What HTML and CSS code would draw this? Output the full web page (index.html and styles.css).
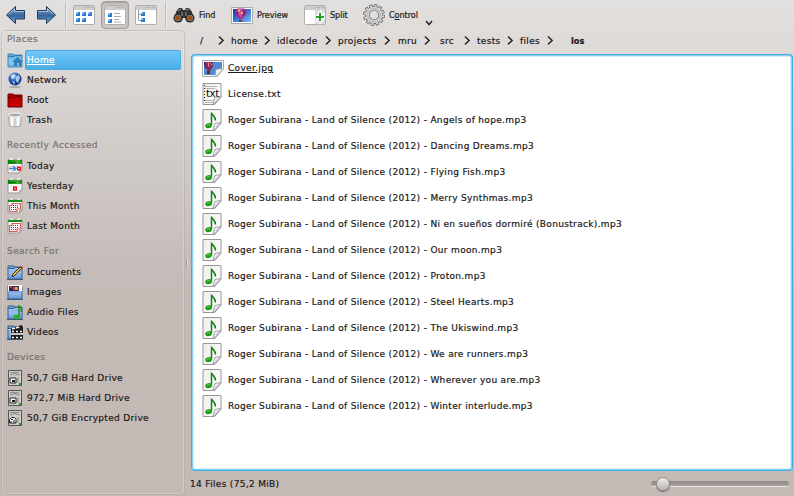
FILE: index.html
```
<!DOCTYPE html>
<html lang="en">
<head>
<meta charset="utf-8">
<title>los</title>
<link rel="stylesheet" href="styles.css">
<script src="app.js" defer></script>
</head>
<body>
<svg class="defs" aria-hidden="true">
  <defs>
    <linearGradient id="gArrow" x1="0" y1="0" x2="0" y2="1"><stop offset="0" stop-color="#8baed7"/><stop offset=".48" stop-color="#416c9f"/><stop offset=".55" stop-color="#34639d"/><stop offset="1" stop-color="#87b8ec"/></linearGradient>
    <linearGradient id="gFolder" x1="0" y1="0" x2="0" y2="1"><stop offset="0" stop-color="#669edb"/><stop offset=".5" stop-color="#9bc0ec"/><stop offset="1" stop-color="#5d94d5"/></linearGradient>
    <linearGradient id="gHome" x1="0" y1="0" x2="0" y2="1"><stop offset="0" stop-color="#4ca6da"/><stop offset=".6" stop-color="#92ccef"/><stop offset="1" stop-color="#63addc"/></linearGradient>
    <linearGradient id="gSky" x1="0" y1="0" x2="1" y2="1"><stop offset="0" stop-color="#0737ac"/><stop offset="1" stop-color="#79bbf5"/></linearGradient>
    <radialGradient id="gGlobe" cx=".4" cy=".3"><stop offset="0" stop-color="#dceeff"/><stop offset=".45" stop-color="#4c84d3"/><stop offset="1" stop-color="#153b91"/></radialGradient>
    <linearGradient id="gPage" x1="0" y1="0" x2="1" y2="1"><stop offset="0" stop-color="#ededed"/><stop offset="1" stop-color="#fff"/></linearGradient>
    <linearGradient id="gRed" x1="0" y1="0" x2="0" y2="1"><stop offset="0" stop-color="#ae0000"/><stop offset="1" stop-color="#d00000"/></linearGradient>
    <linearGradient id="gGreen" x1="0" y1="0" x2="1" y2="0"><stop offset="0" stop-color="#0c850c"/><stop offset=".7" stop-color="#43ae32"/><stop offset="1" stop-color="#16830c"/></linearGradient>
  </defs>
  <symbol id="arrow" viewBox="0 0 20 20"><path d="M1 10 10 1.500v4h9v8.500h-9v4.500z" fill="url(#gArrow)" stroke="#223a5b" stroke-linejoin="round"/><path d="M3 9.500 9 4v2.500h9" fill="none" stroke="#b7d1ec" stroke-width=".8"/></symbol>
  <symbol id="win" viewBox="0 0 22 20"><rect x=".5" y=".5" width="21" height="19" rx="1" fill="#fff" stroke="#b0aeac"/><path d="M1 1h20v4H1z" fill="#cfcdcc"/><path d="M11 2.500h9" stroke="#aaa8a6" stroke-dasharray="1 1"/></symbol>
  <symbol id="icons" viewBox="0 0 22 20"><use href="#win" width="22" height="20"/><path d="M3 7h4v4H3zM9 7h4v4H9zM15 7h4v4h-4zM3 13h4v4H3zM9 13h4v4H9z" fill="#2c78cc"/><path d="M3 7h2v2H3zM9 7h2v2H9zM15 7h2v2h-2zM3 13h2v2H3zM9 13h2v2H9z" fill="#8dc1f2"/></symbol>
  <symbol id="details" viewBox="0 0 22 20"><use href="#win" width="22" height="20"/><path d="M4 8h4v4H4zM4 14h4v4H4z" fill="#2c78cc"/><path d="M4 8h2v2H4zM4 14h2v2H4z" fill="#8dc1f2"/><path d="M10 8.500h6M10 11.500h7M10 14.500h5M10 17h7" stroke="#aaa"/></symbol>
  <symbol id="tree" viewBox="0 0 22 20"><use href="#win" width="22" height="20"/><path d="M3.500 5v10.500H7M3.500 9.500H7" fill="none" stroke="#999"/><path d="M6 7h4v4H6zM6 13h4v4H6z" fill="#2c78cc"/><path d="M6 7h2v2H6zM6 13h2v2H6z" fill="#8dc1f2"/></symbol>
  <symbol id="binoc" viewBox="0 0 22 16"><path d="M1 11 3.500 4 6 1h3l1 2h2l1-2h3l2.500 3L21 11l-3 4h-4l-2-4h-2l-2 4H4z" fill="#343332"/><circle cx="5" cy="11" r="4.500" fill="#222"/><circle cx="17" cy="11" r="4.500" fill="#222"/><circle cx="5" cy="11" r="3" fill="#9c4e19" stroke="#777"/><circle cx="17" cy="11" r="3" fill="#9c4e19" stroke="#777"/><path d="M5 4 8 2M13 3l3-1M9 5v4M13 5v4" stroke="#999"/></symbol>
  <symbol id="preview" viewBox="0 0 22 17"><path d="M.5.5h21v16H.5z" fill="#fff" stroke="#aaa"/><path d="M2 2h18v13H2z" fill="url(#gSky)"/><path d="M4 3 7 1.500h6L16 4l-.5 3-5 5.500h-2L4 7z" fill="#a52e92"/><path d="m7 2 1 6 2 3 1-9z" fill="#c959a0"/><path d="M4 5l3 1v3zM12 3l3 2-3 4z" fill="#642e86"/><path d="M7 2.500h2v2H7zM10 5h2v2h-2z" fill="#efbe54"/><path d="M8 13h3v2H8z" fill="#754319"/></symbol>
  <symbol id="split" viewBox="0 0 22 20"><use href="#win" width="22" height="20"/><path d="M11 5h10v14H11z" fill="#ddd"/><path d="m12 17 8-9M12 12l6-7M15 19l6-7" stroke="#f5f5f5" stroke-width="2"/><path d="M16 8v8M12 12h8" stroke="#fff" stroke-width="4"/><path d="M16 8v8M12 12h8" stroke="#21a321" stroke-width="2"/></symbol>
  <symbol id="gear" viewBox="0 0 22 22"><circle cx="11" cy="11" r="9.200" fill="none" stroke="#666" stroke-width="3.400" stroke-dasharray="3 1.817"/><circle cx="11" cy="11" r="6.800" fill="none" stroke="#666" stroke-width="4.800"/><circle cx="11" cy="11" r="9" fill="none" stroke="#d6d6d6" stroke-width="2.200" stroke-dasharray="1.900 2.812" stroke-dashoffset="-.5"/><circle cx="11" cy="11" r="6.700" fill="none" stroke="#d3d3d3" stroke-width="3.300"/><circle cx="11" cy="11" r="6.500" fill="none" stroke="#b4b4b4"/></symbol>
  <symbol id="folder" viewBox="0 0 16 16"><path d="M1 2h6l1 1h7v12H1z" fill="url(#gFolder)" stroke="#3d6290"/><path d="M1 4.500h6l1-1h7" fill="none" stroke="#345c8d"/><path d="M1.500 5.500h6l1-1h6" fill="none" stroke="#b0cdf0"/><path d="M0 15.500h16" stroke="#405874"/></symbol>
  <symbol id="home" viewBox="0 0 16 16"><path d="M1 2h5l1 1h8v12H1z" fill="url(#gHome)" stroke="#438db8"/><path d="M1 4.500h6l1-1h7" fill="none" stroke="#2d80b0"/><path d="m5 10 5.500-5L16 10h-1.500v4H12v-3h-2v3H7v-4z" fill="#327fb5"/></symbol>
  <symbol id="network" viewBox="0 0 16 16"><ellipse cx="8" cy="15" rx="6" ry="1" fill="#888" opacity=".55"/><circle cx="8" cy="7" r="6.500" fill="url(#gGlobe)"/><path d="m4 3 3-1 1 2-2 3-2-1zM9 5l3-2 1 3-2 5-2-2zM5 9l3 1-1 3z" fill="#c9def4" opacity=".8"/></symbol>
  <symbol id="root" viewBox="0 0 16 16"><path d="M1 2h5l1 1h8v12H1z" fill="url(#gRed)" stroke="#600"/><path d="M1 5.500h6l1-1h7" fill="none" stroke="#690000"/></symbol>
  <symbol id="trash" viewBox="0 0 16 16"><path d="m1.500 3 1 11q5.500 2 11 0l1-11z" fill="#e4e4e3" stroke="#a8a6a4"/><ellipse cx="8" cy="3" rx="6.500" ry="2" fill="#aaa" stroke="#fff"/><path d="M5 6v8M11 6v8" stroke="#fff" stroke-width="2"/><path d="M8 6v8" stroke="#bbb"/></symbol>
  <symbol id="cal" viewBox="0 0 16 16"><path d="M1 2h14v10l-3 3H1z" fill="#fafafa" stroke="#979593"/><path d="M1 2h14v4H1z" fill="url(#gGreen)"/><path d="M3 1h3M10 1h3" stroke="#e6e6e6" stroke-width="2"/><path d="M2 4.500h7" stroke="#086f08"/><path d="m12 15 .5-2.500L15 12z" fill="#ddd" stroke="#999" stroke-width=".7"/></symbol>
  <symbol id="today" viewBox="0 0 16 16"><use href="#cal" width="16" height="16"/><path d="M3 8.500h8M4 12.500h7" stroke="#bbb" stroke-dasharray="1 1"/><path d="M2 10.500h6M6 8l3 2.500L6 13" fill="none" stroke="#4786cf" stroke-width="1.300"/><path d="M10.700 9.200h2.600v2.600h-2.600z" fill="#fff" stroke="#d00" stroke-width="1.300"/></symbol>
  <symbol id="yesterday" viewBox="0 0 16 16"><use href="#cal" width="16" height="16"/><path d="M4 8.500h8M4 12.500h8" stroke="#bbb" stroke-dasharray="1 1"/><path d="M6.700 9.200h2.600v2.600H6.700z" fill="#fff" stroke="#d00" stroke-width="1.300"/></symbol>
  <symbol id="month" viewBox="0 0 16 16"><path d="M1 2h14v10l-3 3H1z" fill="#fff" stroke="#969492"/><path d="M1 2h14v2H1z" fill="#159016"/><path d="M3 1h3M10 1h3" stroke="#ddd" stroke-width="2"/><path d="M5 5.500h8.500V11H10v2.500H2.500v-6H5z" fill="#fff" stroke="#d65c5c" stroke-width="1.200"/><path d="M6 7.500h6M4 9.500h8M4 11.500h5" stroke="#444" stroke-dasharray="1 1"/><path d="m12 15 .5-2.500L15 12z" fill="#ddd" stroke="#888" stroke-width=".7"/></symbol>
  <symbol id="documents" viewBox="0 0 16 16"><use href="#folder" width="16" height="16"/><path d="m5 12.500.5-2L13 3l2 1-8 8z" fill="#eec03b" stroke="#272016" stroke-width=".9"/><path d="m13 3 1-1 2 1-1 1.500z" fill="#df342d"/></symbol>
  <symbol id="images" viewBox="0 0 16 16"><use href="#folder" width="16" height="16"/><path d="M1 1h14v6H1z" fill="#fff"/><path d="M2 2h10v5H2z" fill="#342641"/><path d="M3 2h2v2H3zM6 3h2v3H6z" fill="#c63b62"/><path d="M8 3h3v3H8z" fill="#e19b43"/><path d="M1 7h14v2H1z" fill="#7eaadd"/></symbol>
  <symbol id="audio" viewBox="0 0 16 16"><use href="#folder" width="16" height="16"/><path d="M12 13V2q3 2 2.500 6" fill="none" stroke="#198f1a" stroke-width="1.500"/><ellipse cx="9.500" cy="13" rx="3" ry="2.200" fill="#28b322"/></symbol>
  <symbol id="videos" viewBox="0 0 16 16"><use href="#folder" width="16" height="16"/><path d="M4 4 15 1l1 3v11H4z" fill="#1b1b1b"/><path d="m5 5 2-1 1 1M9 4l2-1 1 1M5 7.500h2M9 7.500h2M13 7.500h2M4 10h12M5 13.500h2M9 13.500h2M13 13.500h2" fill="none" stroke="#fff" stroke-width="1.400"/></symbol>
  <symbol id="drive" viewBox="0 0 16 16"><path d="M1.500.5h13v15h-13z" fill="#d0cecc" stroke="#555"/><path d="m3 3 3-1 3 1 3-1M3 5q5-3 10 0M11 7v6M9 5v1" fill="none" stroke="#868482"/><path d="M3 8h6v5H3z" fill="#fff" stroke="#222"/><path d="M5 10h3v2H5z" fill="#222"/><path d="M12 14h2" stroke="#15a614" stroke-width="2"/></symbol>
  <symbol id="crypt" viewBox="0 0 16 16"><path d="M1.500.5h13v15h-13z" fill="#d0cecc" stroke="#555"/><path d="m3 3 3-1 3 1 3-1M3 5q5-3 10 0M11 7v6" fill="none" stroke="#868482"/><path d="M2.500 13V9.500l2-2h3l1.500 2V13z" fill="#fff" stroke="#242424"/><path d="M4 9.500h2M4 11v2M7 10v3" stroke="#222"/><path d="M12 14h2" stroke="#15a614" stroke-width="2"/></symbol>
  <symbol id="page" viewBox="0 0 20 22"><path d="M1 .5h18v14l-6.500 7H1z" fill="url(#gPage)" stroke="#979797"/></symbol>
  <symbol id="fold" viewBox="0 0 20 22"><path d="m11 20.500 2-6 5.500-1-6 7z" fill="#f2f2f2" stroke="#8c8c8c" stroke-width=".8"/></symbol>
  <symbol id="song" viewBox="0 0 20 22"><use href="#page" width="20" height="22"/><use href="#fold" width="20" height="22"/><path d="M9.500 16V3.500c.5 3 4.500 4 4 8" fill="none" stroke="#158417" stroke-width="1.500"/><ellipse cx="6.600" cy="16.600" rx="3.400" ry="2.500" fill="#199b18" transform="rotate(-12 6.600 16.600)"/><path d="M5 16.500q1-1.500 3-.5" fill="none" stroke="#77dc57"/></symbol>
  <symbol id="text" viewBox="0 0 20 22"><use href="#page" width="20" height="22"/><path d="M3 3.500h12M3 5.500h10M3 17.500h9M3 19.500h8" stroke="#b5b5b5"/><path d="M2.500 2v18" stroke="#333" stroke-dasharray="1 2"/><use href="#fold" width="20" height="22"/></symbol>
  <symbol id="cover" viewBox="0 0 22 17"><path d="M.5.5h21V9l-6 7.500H.5z" fill="#fff" stroke="#aaa"/><path d="M2 2h18v7l-5 6H2z" fill="#5289cf"/><path d="M2 2h9l-2 7H4L2 6z" fill="#273478"/><path d="M3 2h7l1 4-3 5H6L3 7z" fill="#8c255f"/><path d="m6 2 1 5M8 3l2 2" stroke="#ee8a91"/><path d="M5 11h3v3H5z" fill="#493335"/><path d="M13.500 15.500 14 9.500l6.500-1-5.500 7z" fill="#f6f6f6" stroke="#aaa" stroke-width=".8"/></symbol>
  <symbol id="chev" viewBox="0 0 7 11"><path d="m1 2.500 4 4-4 4" fill="none" stroke="#fff" stroke-opacity=".6" stroke-width="1.500"/><path d="m1 1.500 4 4-4 4" fill="none" stroke="#2c2a29" stroke-width="1.700"/></symbol>
</svg>
<div class="window">
  <header class="toolbar">
    <button class="nav"><svg class="i20"><use href="#arrow"/></svg></button>
    <button class="nav forward"><svg class="i20"><use href="#arrow"/></svg></button>
    <i class="sep"></i>
    <button class="mode"><svg class="win"><use href="#icons"/></svg></button>
    <button class="mode active"><svg class="win"><use href="#details"/></svg></button>
    <button class="mode"><svg class="win"><use href="#tree"/></svg></button>
    <i class="sep second"></i>
    <button class="tool find"><svg class="binoc"><use href="#binoc"/></svg><span>Find</span></button>
    <button class="tool preview"><svg class="photo"><use href="#preview"/></svg><span>Preview</span></button>
    <button class="tool split"><svg class="win"><use href="#split"/></svg><span>Split</span></button>
    <button class="tool control"><svg class="gear"><use href="#gear"/></svg><span>C<u>o</u>ntrol</span></button>
    <svg class="caret" viewBox="0 0 8 6"><path d="m1 1 3 3.500L7 1" fill="none" stroke="#292827" stroke-width="1.500"/></svg>
  </header>
  <div class="body">
    <aside class="places">
      <h2>Places</h2>
      <a class="place selected"><svg><use href="#home"/></svg><span>Home</span></a>
      <a class="place"><svg><use href="#network"/></svg><span>Network</span></a>
      <a class="place"><svg><use href="#root"/></svg><span>Root</span></a>
      <a class="place"><svg><use href="#trash"/></svg><span>Trash</span></a>
      <h2>Recently Accessed</h2>
      <a class="place"><svg><use href="#today"/></svg><span>Today</span></a>
      <a class="place"><svg><use href="#yesterday"/></svg><span>Yesterday</span></a>
      <a class="place"><svg><use href="#month"/></svg><span>This Month</span></a>
      <a class="place"><svg><use href="#month"/></svg><span>Last Month</span></a>
      <h2>Search For</h2>
      <a class="place"><svg><use href="#documents"/></svg><span>Documents</span></a>
      <a class="place"><svg><use href="#images"/></svg><span>Images</span></a>
      <a class="place"><svg><use href="#audio"/></svg><span>Audio Files</span></a>
      <a class="place"><svg><use href="#videos"/></svg><span>Videos</span></a>
      <h2>Devices</h2>
      <a class="place"><svg><use href="#drive"/></svg><span>50,7 GiB Hard Drive</span></a>
      <a class="place"><svg><use href="#drive"/></svg><span>972,7 MiB Hard Drive</span></a>
      <a class="place"><svg><use href="#crypt"/></svg><span>50,7 GiB Encrypted Drive</span></a>
    </aside>
    <div class="grip"><i></i><i></i><i></i></div>
    <main>
      <nav class="crumbs">
        <span>/</span><svg><use href="#chev"/></svg><span>home</span><svg><use href="#chev"/></svg><span>idlecode</span><svg><use href="#chev"/></svg><span>projects</span><svg><use href="#chev"/></svg><span>mru</span><svg><use href="#chev"/></svg><span>src</span><svg><use href="#chev"/></svg><span>tests</span><svg><use href="#chev"/></svg><span>files</span><svg><use href="#chev"/></svg><b>los</b>
      </nav>
      <section class="files" id="files">
        <div class="file current"><svg class="photo"><use href="#cover"/></svg><span>Cover.jpg</span></div>
        <div class="file"><svg viewBox="0 0 20 22"><use href="#text" width="20" height="22"/><text x="4" y="14" class="txt">txt</text></svg><span>License.txt</span></div>
      </section>
      <footer><span>14 Files (75,2 MiB)</span><div class="slider"><i></i></div></footer>
    </main>
  </div>
</div>
</body>
</html>
```
FILE: styles.css
```
* { box-sizing: border-box; }
body { margin: 0; font: 9px/14px "DejaVu Sans", sans-serif; letter-spacing: .325px; color: #1c1918; -webkit-text-stroke: .2px; overflow: hidden; }
.defs { position: absolute; width: 0; height: 0; }
.window { width: 794px; height: 496px; display: flex; flex-direction: column; background: linear-gradient(#e2e0de 0, #dcd8d5 60px, #d0cac7 165px, #c5bdb9 260px, #c3bab6 320px); }
button { border: 0; background: none; padding: 0; font: inherit; color: inherit; display: flex; align-items: center; }
svg { display: block; flex: none; }
.toolbar { height: 30px; display: flex; align-items: center; padding-left: 5px; }
.toolbar button { height: 28px; }
.i20 { width: 21px; height: 20px; }
.toolbar .nav { width: 31px; }
.forward svg { transform: scaleX(-1); }
.sep { width: 2px; height: 26px; margin-right: 3px; margin-left: -2px; border-left: 1px solid #c1bdba; border-right: 1px solid #f0eeed; }
.second { margin: 0 6px 0 2px; }
.mode { width: 28px; justify-content: center; margin-right: 3px; }
.active { border: 1px solid #a39e9b; border-radius: 4px; background: #cfcac7; box-shadow: inset 0 1px 2px #9c9794; }
.win { width: 22px; height: 20px; }
.binoc { width: 22px; height: 16px; }
.photo { width: 22px; height: 17px; }
.gear { width: 22px; height: 22px; }
.toolbar .tool { gap: 4px; font: 9px/14px "DejaVu Sans Condensed", "DejaVu Sans", sans-serif; letter-spacing: -.05px; }
.toolbar .tool span { margin-top: -1px; }
.find { width: 58px; }
.preview { width: 73px; }
.split { width: 59px; }
.control { width: 62px; }
.caret { width: 8px; height: 6px; margin-top: 16px; }
.body { flex: 1; min-height: 0; display: flex; }
.places { width: 184px; height: 465px; margin-left: 1px; border-radius: 5px; box-shadow: inset 0 0 0 1px rgba(135,125,120,.32), inset 0 0 0 2px rgba(255,255,255,.22); }
.places h2 { height: 18px; margin: 6px 0 2px; padding-left: 6px; font: 9px/18px "DejaVu Sans", sans-serif; color: #777270; letter-spacing: .42px; }
.places h2:first-child { margin-top: 0; }
.place { display: flex; align-items: center; height: 20px; padding: 0 4px 0 6px; }
.place svg { width: 16px; height: 16px; margin-right: 2px; }
.place span { flex: 1; height: 20px; line-height: 21px; padding-left: 2px; border-radius: 3px; }
.selected span { color: #fff; text-decoration: underline; background: linear-gradient(#73c8fb, #48ade5); box-shadow: inset 0 0 0 1px #48a9e0; }
.grip { width: 5px; padding: 229px 0 0 1px; }
.grip i { display: block; width: 2px; height: 2px; margin-bottom: 1px; background: #938b87; border-right: 1px solid #e8e4e1; }
main { width: 602px; display: flex; flex-direction: column; margin-left: 1px; }
.crumbs { height: 24px; padding: 0 0 3px 9px; display: grid; align-items: center; grid-template-columns: 19px 12px 34px 12px 49px 12px 47px 13px 27px 15px 25px 12px 31px 12px 28px 23px 40px; }
.crumbs svg { width: 7px; height: 11px; margin-left: -1px; }
.crumbs b { font-family: "DejaVu Sans Condensed", "DejaVu Sans", sans-serif; letter-spacing: .1px; }
.files { height: 417px; padding: 1px 0 0 11px; border-radius: 4px; background: #fff; box-shadow: inset 0 0 0 1px #3daee0, inset 0 0 0 2px #8dcfef, inset 0 0 0 3px #d7f0fb; }
.file { display: flex; align-items: center; height: 26px; }
.file svg { width: 20px; height: 22px; margin-right: 6px; }
.file .photo { width: 22px; height: 17px; margin-right: 4px; }
.current span { text-decoration: underline; }
.txt { font: 10.5px "Noto Sans", sans-serif; letter-spacing: 0; fill: #000; }
footer { height: 25px; display: flex; align-items: center; justify-content: space-between; margin-left: -1px; padding-right: 4px; }
.slider { width: 138px; height: 6px; border-radius: 3px; background: linear-gradient(#8d8683, #aaa4a1); border-bottom: 1px solid #e9e5e2; }
.slider i { display: block; width: 14px; height: 14px; margin: -4px 0 0 5px; border-radius: 50%; border: 1px solid #918b87; background: linear-gradient(#ededeb, #b9b5b2); box-shadow: 0 1px 1px #6b6562; }
```
FILE: app.js
```
const titles = ["Angels of hope", "Dancing Dreams", "Flying Fish", "Merry Synthmas", "Ni en sueños dormiré (Bonustrack)", "Our moon", "Proton", "Steel Hearts", "The Ukiswind", "We are runners", "Wherever you are", "Winter interlude"];
document.getElementById("files").insertAdjacentHTML("beforeend", titles.map(t =>
  `<div class="file"><svg><use href="#song"/></svg><span>Roger Subirana - Land of Silence (2012) - ${t}.mp3</span></div>`).join(""));
```
